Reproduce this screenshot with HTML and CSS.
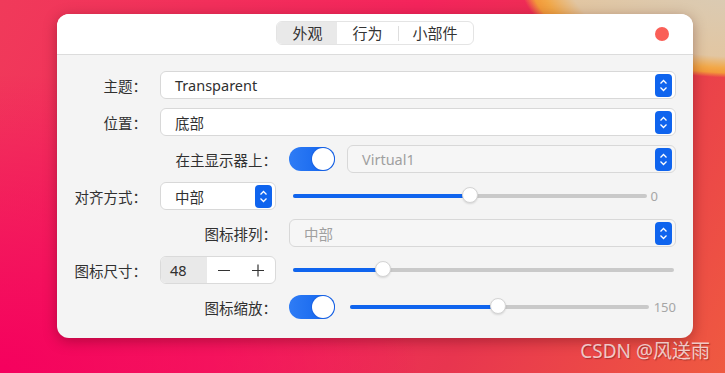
FILE: index.html
```html
<!DOCTYPE html>
<html lang="zh-CN">
<head>
    <meta charset="UTF-8">
    <meta name="viewport" content="width=device-width, initial-scale=1.0">
    <title>Dock 设置</title>
    <link rel="stylesheet" href="styles.css">
</head>
<body>
    <div class="window">
        <div class="titlebar">
            <div></div>
            <div class="tabs">
                <div class="tab active">外观</div>
                <div class="tab">行为</div>
                <div class="tab sep">小部件</div>
            </div>
            <div class="close"></div>
        </div>

        <div class="content">
            <div class="row">
                <div class="label">主题：</div>
                <div class="combo">
                    <span>Transparent</span>
                    <svg class="spin" width="17" height="23" viewBox="0 0 17 23"><rect width="17" height="23" rx="4" fill="#0f64ee"/><path d="M5.5 9.5 L8.5 6.5 L11.5 9.5 M5.5 13.5 L8.5 16.5 L11.5 13.5" fill="none" stroke="#fff" stroke-width="1.3"/></svg>
                </div>
            </div>

            <div class="row">
                <div class="label">位置：</div>
                <div class="combo">
                    <span>底部</span>
                    <svg class="spin" width="17" height="23" viewBox="0 0 17 23"><rect width="17" height="23" rx="4" fill="#0f64ee"/><path d="M5.5 9.5 L8.5 6.5 L11.5 9.5 M5.5 13.5 L8.5 16.5 L11.5 13.5" fill="none" stroke="#fff" stroke-width="1.3"/></svg>
                </div>
            </div>

            <div class="row indent">
                <div class="label">在主显示器上：</div>
                <div class="toggle"><div class="knob"></div></div>
                <div class="combo disabled gap-left">
                    <span>Virtual1</span>
                    <svg class="spin" width="17" height="23" viewBox="0 0 17 23"><rect width="17" height="23" rx="4" fill="#0f64ee"/><path d="M5.5 9.5 L8.5 6.5 L11.5 9.5 M5.5 13.5 L8.5 16.5 L11.5 13.5" fill="none" stroke="#fff" stroke-width="1.3"/></svg>
                </div>
            </div>

            <div class="row">
                <div class="label">对齐方式：</div>
                <div class="combo small">
                    <span>中部</span>
                    <svg class="spin" width="17" height="23" viewBox="0 0 17 23"><rect width="17" height="23" rx="4" fill="#0f64ee"/><path d="M5.5 9.5 L8.5 6.5 L11.5 9.5 M5.5 13.5 L8.5 16.5 L11.5 13.5" fill="none" stroke="#fff" stroke-width="1.3"/></svg>
                </div>
                <div class="slider after-box">
                    <div class="rail" style="--v: 50%">
                        <div class="fill"></div>
                        <div class="handle"></div>
                    </div>
                </div>
                <div class="value zero">0</div>
            </div>

            <div class="row indent">
                <div class="label">图标排列：</div>
                <div class="combo disabled">
                    <span>中部</span>
                    <svg class="spin" width="17" height="23" viewBox="0 0 17 23"><rect width="17" height="23" rx="4" fill="#0f64ee"/><path d="M5.5 9.5 L8.5 6.5 L11.5 9.5 M5.5 13.5 L8.5 16.5 L11.5 13.5" fill="none" stroke="#fff" stroke-width="1.3"/></svg>
                </div>
            </div>

            <div class="row">
                <div class="label">图标尺寸：</div>
                <div class="spinbox">
                    <div class="num">48</div>
                    <div class="step">
                        <svg width="14" height="14" viewBox="0 0 14 14"><path d="M1 7.5 H13" stroke="#333" stroke-width="1.2"/></svg>
                    </div>
                    <div class="step">
                        <svg width="14" height="14" viewBox="0 0 14 14"><path d="M1 7.5 H13 M7 1.5 V13.5" stroke="#333" stroke-width="1.2"/></svg>
                    </div>
                </div>
                <div class="slider after-box end">
                    <div class="rail" style="--v: 22.5%">
                        <div class="fill"></div>
                        <div class="handle"></div>
                    </div>
                </div>
            </div>

            <div class="row indent">
                <div class="label">图标缩放：</div>
                <div class="toggle"><div class="knob"></div></div>
                <div class="slider after-toggle">
                    <div class="rail" style="--v: 49.6%">
                        <div class="fill"></div>
                        <div class="handle"></div>
                    </div>
                </div>
                <div class="value">150</div>
            </div>
        </div>
    </div>

    <div class="watermark">CSDN @风送雨</div>
</body>
</html>
```

FILE: styles.css
```css
body {
    margin: 0;
    width: 725px;
    height: 373px;
    overflow: hidden;
    position: relative;
    box-sizing: border-box;
    padding: 14px 0 0 57px;
    font-family: "Noto Sans", "Noto Sans CJK SC", sans-serif;
    color: #303030;
    background:
        radial-gradient(ellipse 225px 96px at 745px -18px, #d8ccb8 0%, #e2c6a2 78%, #f2a848 90%, #f39a3a 95%, rgba(243,90,80,0) 100%),
        radial-gradient(ellipse 420px 300px at 0 373px, #f5005e 0%, rgba(245,0,94,0) 100%),
        linear-gradient(120deg, #f03a5a 0%, #f4245c 45%, #e8354f 70%, #ef5a40 100%);
}
.window {
    width: 636px;
    height: 324px;
    border-radius: 12px;
    background-color: #f4f4f4;
    box-shadow: 0 3px 14px rgba(60,0,10,0.35);
    overflow: hidden;
}
.titlebar {
    height: 40px;
    background-color: #fff;
    border-bottom: 1px solid #dcdcdc;
    display: grid;
    grid-template-columns: 1fr auto 1fr;
    align-items: center;
}
.tabs {
    display: flex;
    height: 22px;
    border: 1px solid #e4e4e4;
    border-radius: 6px;
    overflow: hidden;
    margin-top: -2px;
    font-size: 15px;
}
.tab {
    padding: 0 15px;
    line-height: 22px;
    color: #333;
}
.tab.active {
    background-color: #e9e9e9;
}
.tab.sep {
    background: linear-gradient(#dedede, #dedede) left center / 1px 15px no-repeat;
}
.close {
    justify-self: end;
    width: 14px;
    height: 14px;
    border-radius: 50%;
    background-color: #fa5f57;
    margin-right: 24px;
    margin-top: -1px;
}
.content {
    padding: 16px 17px 0 12px;
    display: flex;
    flex-direction: column;
    gap: 9px;
    font-size: 14.5px;
}
.row {
    display: flex;
    align-items: center;
    height: 28px;
}
.label {
    width: 78px;
    margin-right: 13px;
    text-align: right;
    white-space: nowrap;
}
.row.indent .label {
    width: 208px;
    margin-right: 12px;
}
.combo {
    flex: 1;
    height: 28px;
    box-sizing: border-box;
    border: 1px solid #d8d8d8;
    border-radius: 6px;
    background-color: #fff;
    display: flex;
    align-items: center;
    justify-content: space-between;
    padding: 0 3px 0 14px;
}
.combo.small {
    flex: none;
    width: 116px;
}
.combo.disabled {
    background-color: #f6f6f6;
    color: #a0a0a0;
}
.combo.gap-left {
    margin-left: 12px;
}
.spin {
    display: block;
}
.toggle {
    width: 46px;
    height: 24px;
    border-radius: 12px;
    background: linear-gradient(90deg, #2f7cf5, #0e61ec);
    display: flex;
    justify-content: flex-end;
    align-items: center;
    padding: 0 1px;
    box-sizing: border-box;
}
.knob {
    width: 22px;
    height: 22px;
    border-radius: 50%;
    background-color: #fff;
    box-shadow: 0 0 0 1px rgba(20,90,220,0.6);
}
.slider {
    flex: 1;
    height: 18px;
    display: flex;
    align-items: center;
}
.slider.after-box {
    margin-left: 17px;
}
.slider.end {
    margin-right: 2px;
}
.slider.after-toggle {
    margin-left: 15px;
}
.rail {
    position: relative;
    flex: 1;
    height: 4px;
    border-radius: 2px;
    background-color: #c9c9c9;
}
.fill {
    height: 4px;
    border-radius: 2px;
    background-color: #0f64ee;
    width: calc(8px + (100% - 16px) * var(--v) / 100%);
}
.handle {
    position: absolute;
    top: -7px;
    left: calc((100% - 16px) * var(--v) / 100%);
    width: 16px;
    height: 16px;
    box-sizing: border-box;
    border-radius: 50%;
    background-color: #fff;
    border: 1px solid #d4d4d4;
    box-shadow: 0 1px 2px rgba(0,0,0,0.12);
}
.value {
    margin-left: 5px;
    font-size: 13px;
    color: #a6a6a6;
}
.value.zero {
    margin-left: 4px;
    margin-right: 18px;
}
.spinbox {
    width: 116px;
    height: 28px;
    box-sizing: border-box;
    border: 1px solid #dadada;
    border-radius: 6px;
    display: flex;
    overflow: hidden;
    background-color: #fff;
}
.num {
    width: 46px;
    background-color: #e9e9e9;
    line-height: 26px;
    padding-left: 9px;
    box-sizing: border-box;
}
.step {
    flex: 1;
    display: flex;
    align-items: center;
    justify-content: center;
}
.watermark {
    position: absolute;
    right: 15px;
    bottom: 9px;
    font-size: 19px;
    color: rgba(255,255,255,0.72);
    text-shadow: 1px 1px 1px rgba(90,20,20,0.45);
}
```
